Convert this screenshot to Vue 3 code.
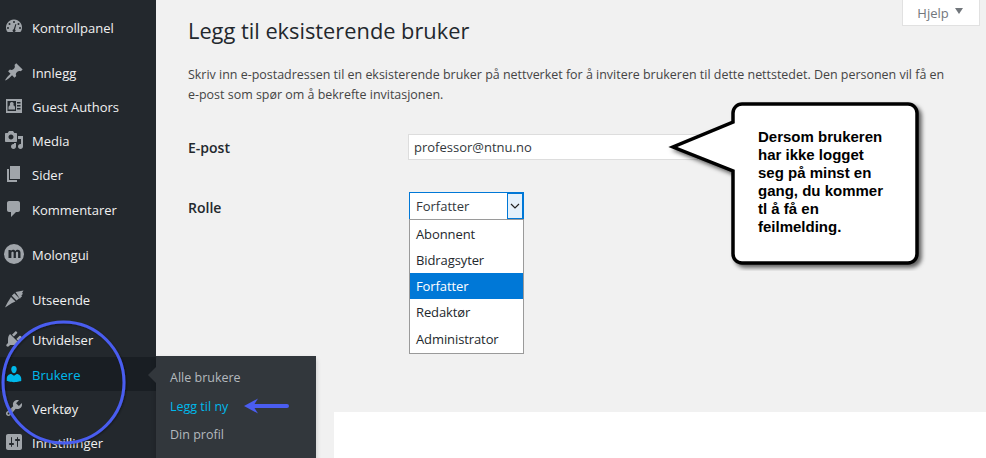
<script setup>
const menu = [
  { label: 'Kontrollpanel', icon: 'dash', h: 36, gap: 10 },
  { label: 'Innlegg', icon: 'pin', h: 34 },
  { label: 'Guest Authors', icon: 'card', h: 34 },
  { label: 'Media', icon: 'media', h: 34 },
  { label: 'Sider', icon: 'pages', h: 34 },
  { label: 'Kommentarer', icon: 'comment', h: 36, gap: 9 },
  { label: 'Molongui', icon: 'molongui', h: 36, gap: 9 },
  { label: 'Utseende', icon: 'brush', h: 36, gap: 4 },
  { label: 'Utvidelser', icon: 'plug', h: 35 },
  { label: 'Brukere', icon: 'user', h: 34, active: true, low: true },
  { label: 'Verktøy', icon: 'wrench', h: 34, low: true },
  { label: 'Innstillinger', icon: 'sliders', h: 34, low: true }
]
const roles = ['Abonnent', 'Bidragsyter', 'Forfatter', 'Redaktør', 'Administrator']
const lines = ['Dersom brukeren', 'har ikke logget', 'seg på minst en', 'gang, du kommer', 'tl å få en', 'feilmelding.']
</script>

<template>
  <div class="page">
    <aside class="side">
      <ul class="menu">
        <li v-for="m in menu" :key="m.label" class="item" :class="{ active: m.active, low: m.low }" :style="{ height: m.h + 'px', marginBottom: (m.gap || 0) + 'px' }">
          <svg class="ico" viewBox="0 0 20 20" width="20" height="20">
            <path v-if="m.icon === 'dash'" fill-rule="evenodd" d="M10 2.500a8 8 0 0 0-7.200 11.500c.3.600 1 1 1.700 1h11c.7 0 1.400-.4 1.700-1A8 8 0 0 0 10 2.500zM10 4a1 1 0 1 1 0 2 1 1 0 0 1 0-2zM5.500 6a1 1 0 1 1 0 2 1 1 0 0 1 0-2zM14.500 6a1 1 0 1 1 0 2 1 1 0 0 1 0-2zM4 10a1 1 0 1 1 0 2 1 1 0 0 1 0-2zM16 10a1 1 0 1 1 0 2 1 1 0 0 1 0-2zM11.500 7l.9.3-1.400 5.300a1.400 1.400 0 1 1-1.300-.3z"/>
            <path v-else-if="m.icon === 'pin'" d="M10.440 3.020l1.820-1.820 6.360 6.350-1.830 1.820c-1.050-.68-2.480-.57-3.410.36l-.75.75c-.92.93-1.040 2.350-.35 3.410l-1.830 1.820-2.410-2.410-2.800 2.790c-.42.42-3.380 2.710-3.800 2.290s1.860-3.390 2.280-3.810l2.790-2.790L4.100 9.360l1.830-1.820c1.050.69 2.480.57 3.400-.36l.75-.75c.93-.92 1.050-2.350.36-3.410z"/>
            <path v-else-if="m.icon === 'card'" fill-rule="evenodd" d="M2 3h16v14H2zM3.500 5v10h8.500V5zM13 6v1.500h3.500V6zM13 9v1.500h3.500V9zM13 12v1.500h3.500V12zM7.700 6a2 2 0 0 1 1.600 3.200c1 .3 1.700 1 1.700 2.300v2H4.500v-2c0-1.300.7-2 1.700-2.300A2 2 0 0 1 7.700 6z"/>
            <path v-else-if="m.icon === 'media'" fill-rule="evenodd" d="M13 11V4c0-.55-.45-1-1-1h-1.670L9 1H5L3.670 3H2c-.55 0-1 .45-1 1v7c0 .55.45 1 1 1h10c.55 0 1-.45 1-1zM7 4.500c1.380 0 2.500 1.120 2.500 2.500S8.380 9.500 7 9.500 4.500 8.380 4.500 7 5.620 4.500 7 4.500zM14 6h5v10.500c0 1.380-1.120 2.500-2.500 2.500S14 17.880 14 16.500s1.120-2.500 2.500-2.500c.17 0 .34.020.5.050V9h-3V6zm-4 8.050V13h2v3.500c0 1.380-1.120 2.500-2.500 2.500S7 17.880 7 16.500 8.120 14 9.500 14c.17 0 .34.020.5.050z"/>
            <path v-else-if="m.icon === 'pages'" d="M6 15V2h10v13H6zm-1 1h8v2H3V5h2v11z"/>
            <path v-else-if="m.icon === 'comment'" d="M5 2h9c1.100 0 2 .9 2 2v7c0 1.100-.9 2-2 2h-2l-5 5v-5H5c-1.100 0-2-.9-2-2V4c0-1.100.9-2 2-2z"/>
            <path v-else-if="m.icon === 'molongui'" fill-rule="evenodd" d="M10 0a10 10 0 1 0 0 20 10 10 0 0 0 0-20zM4.500 6h2.300v1c.6-.8 1.400-1.200 2.300-1.200 1 0 1.800.5 2.200 1.300.7-.9 1.500-1.300 2.500-1.300 1.500 0 2.700 1 2.700 3V14h-2.400V8.700c0-.7-.4-1-1-1-.7 0-1.200.5-1.200 1.200V14h-2.300V8.700c0-.7-.4-1-1-1-.7 0-1.200.5-1.200 1.200V14H4.500z"/>
            <path v-else-if="m.icon === 'brush'" d="M11.500 3l8-1.500-1.500 2.500 1 .7-1.600 1.800.6 1-1.600 1.300-.4 1.200zM10.300 4.200l5 5-2.800 2.300-4.700-4.800zM7 8l4.500 4.500-3.500 1.500c-2 1-4 3-7 4.500 1-2.500 2.500-5 3.500-6.500z"/>
            <path v-else-if="m.icon === 'plug'" d="M13.110 4.360L9.870 7.600 8 5.730l3.240-3.240c.35-.34 1.050-.2 1.560.32.520.51.660 1.210.310 1.550zm-8 1.770l.91-1.120 9.010 9.010-1.190.84c-.71.710-2.630 1.160-3.820 1.160H6.140L4.900 17.260c-.59.590-1.540.59-2.120 0-.59-.58-.59-1.530 0-2.120l1.240-1.240v-3.880c0-1.130.4-3.050 1.090-3.890zm7.260 3.970l3.240-3.240c.34-.35 1.040-.21 1.550.31.520.51.660 1.210.31 1.550l-3.240 3.250z"/>
            <path v-else-if="m.icon === 'user'" d="M10 9.250c-2.270 0-2.730-3.440-2.730-3.440C7 4.020 7.820 2 9.970 2c2.160 0 2.980 2.020 2.710 3.810 0 0-.41 3.440-2.680 3.440zm0 2.570L12.720 10c2.390 0 4.520 2.330 4.520 4.530v2.490s-3.650 1.130-7.240 1.130c-3.650 0-7.240-1.130-7.240-1.130v-2.490c0-2.250 1.940-4.500 4.470-4.500z"/>
            <path v-else-if="m.icon === 'wrench'" fill-rule="evenodd" d="M16.680 9.770c-1.340 1.340-3.300 1.670-4.950.99l-5.410 6.520c-.99.99-2.590.99-3.580 0s-.99-2.590 0-3.580l6.520-5.420c-.68-1.650-.35-3.610.99-4.950 1.280-1.280 3.120-1.620 4.720-1.060l-2.890 2.890 2.820 2.820 2.890-2.890c.56 1.600.22 3.440-1.060 4.720zM3.810 16.210c.4.390 1.030.39 1.420 0 .4-.4.400-1.030 0-1.430-.39-.39-1.020-.39-1.420 0-.39.4-.39 1.030 0 1.430z"/>
            <path v-else fill-rule="evenodd" d="M18 16V4c0-1.100-.9-2-2-2H4c-1.100 0-2 .9-2 2v12c0 1.100.9 2 2 2h12c1.100 0 2-.9 2-2zM8 11h1c.55 0 1 .45 1 1s-.45 1-1 1H8v1.500c0 .28-.22.5-.5.5s-.5-.22-.5-.5V13H6c-.55 0-1-.45-1-1s.45-1 1-1h1V5.500c0-.28.22-.5.5-.5s.5.22.5.5V11zm5-2h-1c-.55 0-1-.45-1-1s.45-1 1-1h1V5.500c0-.28.22-.5.5-.5s.5.22.5.5V7h1c.55 0 1 .45 1 1s-.45 1-1 1h-1v5.500c0 .28-.22.5-.5.5s-.5-.22-.5-.5V9z"/>
          </svg>
          <span>{{ m.label }}</span>
        </li>
      </ul>
      <div class="fly">
        <span class="fly-notch"></span>
        <div class="fly-link">Alle brukere</div>
        <div class="fly-link on">Legg til ny</div>
        <div class="fly-link">Din profil</div>
      </div>
    </aside>

    <main class="main">
      <div class="help-row"><div class="help">Hjelp <i class="caret"></i></div></div>
      <h1>Legg til eksisterende bruker</h1>
      <p class="lead">Skriv inn e-postadressen til en eksisterende bruker på nettverket for å invitere brukeren til dette nettstedet. Den personen vil få en e-post som spør om å bekrefte invitasjonen.</p>
      <div class="form">
        <label>E-post</label>
        <div class="input">professor@ntnu.no</div>
        <label class="role-label">Rolle</label>
        <div class="select-wrap">
          <div class="select">
            <span>Forfatter</span>
            <span class="sel-btn"><svg width="10" height="6" viewBox="0 0 10 6"><path d="M1 1l4 4 4-4" fill="none" stroke="#222" stroke-width="1.200"/></svg></span>
          </div>
          <ul class="drop">
            <li v-for="r in roles" :key="r" :class="{ sel: r === 'Forfatter' }">{{ r }}</li>
          </ul>
        </div>
      </div>
      <div class="white"></div>
    </main>

    <svg class="callout" viewBox="0 0 270 175" width="270" height="175">
      <defs><filter id="sh" x="-10%" y="-10%" width="125%" height="125%"><feDropShadow dx="3" dy="3" stdDeviation="2" flood-color="#000" flood-opacity=".6"/></filter></defs>
      <path filter="url(#sh)" d="M84 8h166a9 9 0 0 1 9 9v141a9 9 0 0 1-9 9H84a9 9 0 0 1-9-9V75L15 51l60-25v-9a9 9 0 0 1 9-9z" fill="#fff" stroke="#000" stroke-width="3.500"/>
      <text v-for="(l, i) in lines" :key="l" class="call-text" x="100" :y="45.500 + i * 18.100">{{ l }}</text>
    </svg>

    <svg class="ring" viewBox="0 0 130 130" width="130" height="130">
      <defs><filter id="rs" x="-10%" y="-10%" width="120%" height="120%"><feDropShadow dx="1" dy="1" stdDeviation="1" flood-color="#000" flood-opacity=".4"/></filter></defs>
      <circle cx="63.500" cy="63.500" r="60.500" fill="none" stroke="#4a5df0" stroke-width="3" filter="url(#rs)"/>
    </svg>
    <svg class="arrow" viewBox="0 0 48 18" width="48" height="18">
      <path d="M1 9l14-7.500-3.500 5.500H44a2 2 0 0 1 0 4H11.500l3.500 5.500z" fill="#4a5df0"/>
    </svg>
  </div>
</template>

<style>
html, body { margin: 0; padding: 0; background: #f1f1f1; }
</style>

<style scoped>
.page { position: relative; width: 986px; height: 458px; overflow: hidden; display: flex; background: #f1f1f1; font-family: "Open Sans", sans-serif; color: #23282d; }
.side { position: relative; width: 156px; flex: none; background: #23282d; }
.menu { list-style: none; margin: 0; padding: 10px 0 0; }
.item { display: flex; align-items: center; padding-left: 4px; gap: 8px; color: #f1f1f1; font-size: 13px; box-sizing: border-box; }
.item.low { padding-top: 2px; }
.item.active { background: #191e23; color: #00b9eb; }
.ico { fill: #a0a5aa; flex: none; margin-top: -2px; }
.active .ico { fill: #00b9eb; }
.fly { position: absolute; left: 156px; top: 356px; width: 160px; height: 110px; background: #32373c; padding-top: 8px; box-shadow: 0 3px 5px rgba(0,0,0,.2); box-sizing: border-box; }
.fly-notch { position: absolute; left: -8px; top: 11px; border: 8px solid transparent; border-left: 0; border-right-color: #32373c; }
.fly-link { height: 28.500px; line-height: 28.500px; padding-left: 14px; font-size: 12.500px; color: #b4b9be; }
.fly-link.on { color: #00b9eb; }
.main { flex: 1; position: relative; padding: 0 6px 0 32px; min-width: 0; }
.help-row { display: flex; justify-content: flex-end; }
.help { width: 78px; height: 26px; box-sizing: border-box; background: #fff; border: 1px solid #e1e1e1; border-top: 0; font-size: 13px; color: #72777c; display: flex; align-items: center; justify-content: center; gap: 6px; padding-right: 2px; }
.caret { width: 0; height: 0; border: 4.500px solid transparent; border-top: 6px solid #72777c; border-bottom: 0; margin-bottom: 3px; }
h1 { margin: -10px 0 0; font-size: 21.800px; font-weight: 400; line-height: 30px; color: #23282d; }
.lead { margin: 19px 0 0; max-width: 762px; font-size: 12.460px; line-height: 20px; color: #444; }
.form { display: grid; grid-template-columns: 220px 1fr; margin-top: 29px; align-items: center; }
label { font-size: 14px; font-weight: 600; color: #23282d; }
.input { height: 26px; width: 290px; box-sizing: border-box; border: 1px solid #ddd; background: #fff; font-size: 13px; line-height: 24px; padding-left: 5px; color: #32373c; }
.role-label { margin-top: 32px; align-self: start; padding-top: 6px; }
.select-wrap { position: relative; margin: 32px 0 0 1px; height: 28px; width: 115px; }
.select { display: flex; justify-content: space-between; align-items: center; height: 28px; box-sizing: border-box; border: 1px solid #0078d7; background: #fff; padding-left: 6px; font-size: 13px; color: #32373c; }
.sel-btn { width: 16px; height: 26px; box-sizing: border-box; border: 1px solid #0078d7; background: #e5f1fb; display: flex; align-items: center; justify-content: center; }
.drop { list-style: none; position: absolute; left: 0; top: 27px; width: 115px; box-sizing: border-box; margin: 0; padding: 1px 0 0; background: #fff; border: 1px solid #9a9a9a; font-size: 13px; letter-spacing: -.1px; color: #23282d; z-index: 2; }
.drop li { height: 26px; line-height: 26px; padding-left: 6px; }
.drop li:nth-child(n+4) { height: 27px; line-height: 27px; }
.drop .sel { background: #0078d7; color: #fff; }
.white { position: absolute; left: 178px; top: 412px; right: 0; height: 60px; background: #fff; }
.callout { position: absolute; left: 658px; top: 96px; }
.call-text { font-family: "Liberation Sans", sans-serif; font-weight: 700; font-size: 15px; fill: #000; }
.ring { position: absolute; left: 0; top: 319px; }
.arrow { position: absolute; left: 243px; top: 397px; }
</style>
